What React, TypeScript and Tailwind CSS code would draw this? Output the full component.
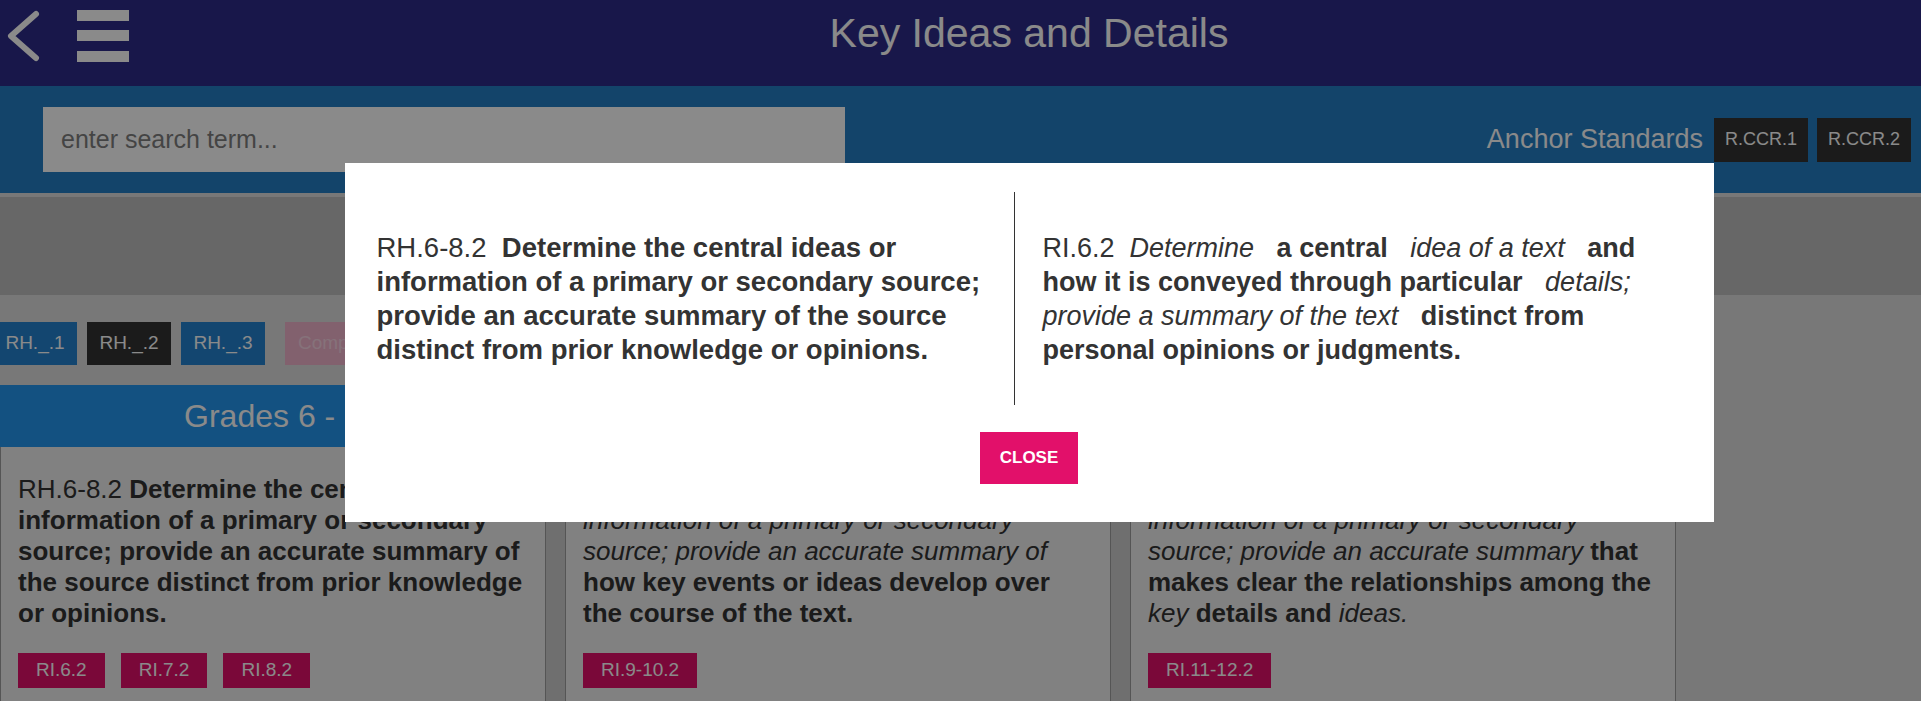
import React from 'react';

type Column = {
  grade: string;
  body: React.ReactNode;
  tags: string[];
};

const columns: Column[] = [
  {
    grade: 'Grades 6 - 8',
    body: (
      <>
        RH.6-8.2{' '}
        <b>
          Determine the central ideas or information of a primary or secondary source; provide an accurate summary of
          the source distinct from prior knowledge or opinions.
        </b>
      </>
    ),
    tags: ['RI.6.2', 'RI.7.2', 'RI.8.2'],
  },
  {
    grade: 'Grades 9 - 10',
    body: (
      <>
        RH.9-10.2{' '}
        <i>
          Determine the central ideas or information of a primary or secondary source; provide an accurate summary of
        </i>{' '}
        <b>how key events or ideas develop over the course of the text.</b>
      </>
    ),
    tags: ['RI.9-10.2'],
  },
  {
    grade: 'Grades 11 - 12',
    body: (
      <>
        RH.11-12.2{' '}
        <i>Determine the central ideas or information of a primary or secondary source; provide an accurate summary</i>{' '}
        <b>that makes clear the relationships among the</b> <i>key</i> <b>details and</b> <i>ideas.</i>
      </>
    ),
    tags: ['RI.11-12.2'],
  },
];

const sep = '\u00a0\u00a0 ';

function Header() {
  return (
    <div className="grid h-[86px] grid-cols-[1fr_auto_1fr] items-start bg-[#2e2c89] text-white">
      <div className="flex items-start">
        {/* back chevron */}
        <svg width="40" height="60" viewBox="0 0 40 60" className="ml-[4px] mt-[6px]">
          <polyline
            points="32,8 7,30 32,52"
            fill="none"
            stroke="#ffffff"
            strokeWidth="6"
            strokeLinecap="round"
            strokeLinejoin="round"
          />
        </svg>
        {/* menu */}
        <svg width="52" height="52" viewBox="0 0 52 52" className="ml-[33px] mt-[10px]">
          <rect x="0" y="0" width="52" height="11" fill="#ffffff" />
          <rect x="0" y="20" width="52" height="11" fill="#ffffff" />
          <rect x="0" y="41" width="52" height="11" fill="#ffffff" />
        </svg>
      </div>
      <h1 className="mt-[10px] text-[41px] leading-[47px] font-normal">Key Ideas and Details</h1>
      <div />
    </div>
  );
}

function SearchBand() {
  return (
    <div className="flex items-center bg-[#237ec4] py-[21px] pr-[147px]">
      <input
        className="ml-[43px] h-[65px] w-[802px] bg-white pl-[18px] text-[25px] text-[#333] outline-none placeholder:text-[#7f7f7f]"
        placeholder="enter search term..."
      />
      <div className="ml-auto flex items-center">
        <span className="mr-[11px] text-[27px] text-white">Anchor Standards</span>
        <div className="flex gap-[9px]">
          {['R.CCR.1', 'R.CCR.2'].map((s) => (
            <div key={s} className="flex h-[44px] w-[94px] items-center justify-center bg-[#333] text-[18px] text-white">
              {s}
            </div>
          ))}
        </div>
      </div>
    </div>
  );
}

function Card({ col }: { col: Column }) {
  return (
    <div className="flex w-[546px] flex-col">
      <div className="flex h-[62px] items-center justify-center bg-[#2396ee] text-[32px] text-white">{col.grade}</div>
      <div className="flex-1 border-x border-[#9d9d9d] bg-[#eeeeee] pb-[40px] pl-[17px] pr-[17px] pt-[27px]">
        <p className="text-[26px] leading-[31px] text-[#333]">{col.body}</p>
        <div className="mt-[24px] flex gap-[16px]">
          {col.tags.map((t) => (
            <span key={t} className="flex h-[35px] items-center bg-[#e2106a] px-[18px] text-[19px] text-white">
              {t}
            </span>
          ))}
        </div>
      </div>
    </div>
  );
}

function Modal() {
  return (
    <div className="w-[1369px] bg-white pb-[38px] pt-[29px] leading-[34px] text-[#333]">
      <div className="flex">
        <div className="flex h-[213px] w-[669px] items-center pl-[32px] pr-[7px] text-[27.5px]">
          <p>
            {'RH.6-8.2\u00a0 '}
            <b>
              Determine the central ideas or information of a primary or secondary source; provide an accurate summary
              of the source distinct from prior knowledge or opinions.
            </b>
          </p>
        </div>
        <div className="flex h-[213px] w-[700px] items-center border-l border-[#333] pl-[28px] pr-[45px] text-[27px]">
          <p>
            {'RI.6.2\u00a0 '}
            <i>Determine</i>
            {sep}
            <b>a central</b>
            {sep}
            <i>idea of a text</i>
            {sep}
            <b>and how it is conveyed through particular</b>
            {sep}
            <i>details; provide a summary of the text</i>
            {sep}
            <b>distinct from personal opinions or judgments.</b>
          </p>
        </div>
      </div>
      <button className="mx-auto mt-[27px] flex h-[52px] w-[98px] items-center justify-center bg-[#e2106a] text-[17px] font-bold text-white">
        CLOSE
      </button>
    </div>
  );
}

export default function App() {
  return (
    <div className="h-[701px] w-full overflow-hidden font-['Liberation_Sans',Arial,Helvetica,sans-serif]">
      <div className="relative h-[701px] w-[2058px] bg-[#dedede]">
        <Header />
        <SearchBand />
        <div className="pt-[4px]">
          <div className="h-[98px] bg-[#bfbfbf]" />
          <div className="ml-[-7px] mt-[27px] flex gap-[10px]">
            <div className="flex h-[43px] w-[84px] items-center justify-center bg-[#2382cf] text-[19px] text-white">RH._.1</div>
            <div className="flex h-[43px] w-[84px] items-center justify-center bg-[#333] text-[19px] text-white">RH._.2</div>
            <div className="flex h-[43px] w-[84px] items-center justify-center bg-[#2382cf] text-[19px] text-white">RH._.3</div>
            <div className="ml-[10px] flex h-[43px] items-center bg-[#f0b3cc] px-[13px] text-[19px] text-[#f7d3e2]">Compare</div>
          </div>
          <div className="mt-[20px] flex w-[1676px] gap-[19px] bg-[#cdcdcd]">
            {columns.map((c) => (
              <Card key={c.grade} col={c} />
            ))}
          </div>
        </div>

        <div className="absolute inset-0 flex items-start justify-center bg-black/[0.46] pt-[163px]">
          <Modal />
        </div>
      </div>
    </div>
  );
}
